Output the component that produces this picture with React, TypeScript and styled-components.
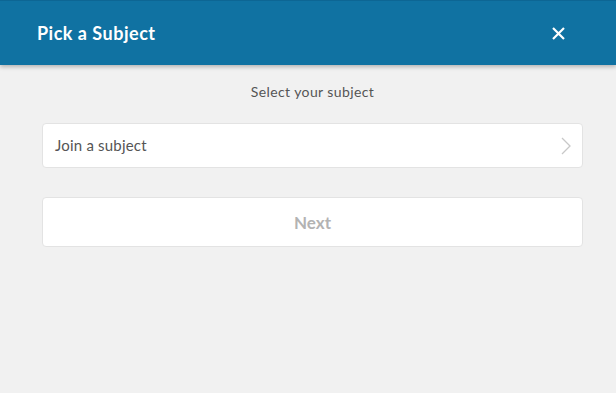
import React from 'react';
import styled, { createGlobalStyle } from 'styled-components';

const GlobalStyle = createGlobalStyle`
  html, body {
    margin: 0;
    padding: 0;
    background: #f1f1f1;
    font-family: Lato, "Noto Sans", sans-serif;
  }
  #root {
    min-height: 393px;
  }
`;

const Page = styled.div`
  min-height: 393px;
  background: #f1f1f1;
`;

const Header = styled.header`
  height: 65px;
  box-sizing: border-box;
  display: flex;
  align-items: center;
  justify-content: space-between;
  padding: 0 51px 0 37px;
  background: #1072a2;
  border-top: 1px solid #0d6694;
  box-shadow: 0 2px 4px rgba(0, 0, 0, 0.25);
  position: relative;
`;

const Title = styled.h1`
  margin: 0;
  font-size: 18px;
  font-weight: 700;
  color: #ffffff;
  letter-spacing: 0.5px;
`;

const CloseButton = styled.button`
  border: 0;
  padding: 0;
  background: transparent;
  display: flex;
  align-items: center;
  justify-content: center;
  width: 14px;
  height: 14px;
  cursor: pointer;
`;

const Content = styled.main`
  display: flex;
  flex-direction: column;
  padding: 16px 33px 0 42px;
`;

const Subtitle = styled.p`
  margin: 0 0 20px;
  text-align: center;
  font-size: 14px;
  line-height: 22px;
  letter-spacing: 0.4px;
  color: #555555;
`;

const Card = styled.div<{ $height: number }>`
  height: ${p => p.$height}px;
  box-sizing: border-box;
  background: #ffffff;
  border: 1px solid #e3e3e3;
  border-radius: 4px;
  display: flex;
  align-items: center;
`;

const SelectRow = styled(Card)`
  justify-content: space-between;
  padding: 0 11px 0 12px;
  font-size: 15px;
  letter-spacing: 0.2px;
  color: #555555;
  cursor: pointer;
  margin-bottom: 29px;

  span {
    margin-top: -2px;
  }
`;

const NextButton = styled(Card)`
  justify-content: center;
  font-size: 17px;
  font-weight: 700;
  color: #b3b3b3;
`;

const CloseIcon = () => (
  <svg width="13" height="13" viewBox="0 0 13 13" fill="none">
    <path d="M1 1L12 12M12 1L1 12" stroke="#ffffff" strokeWidth="2.2" />
  </svg>
);

const Chevron = () => (
  <svg width="10" height="18" viewBox="0 0 10 18" fill="none">
    <path d="M1 1L9 9L1 17" stroke="#c8c8c8" strokeWidth="1.3" />
  </svg>
);

const App = () => (
  <Page>
    <GlobalStyle />
    <Header>
      <Title>Pick a Subject</Title>
      <CloseButton aria-label="Close">
        <CloseIcon />
      </CloseButton>
    </Header>
    <Content>
      <Subtitle>Select your subject</Subtitle>
      <SelectRow $height={45}>
        <span>Join a subject</span>
        <Chevron />
      </SelectRow>
      <NextButton $height={50}>Next</NextButton>
    </Content>
  </Page>
);

export default App;
